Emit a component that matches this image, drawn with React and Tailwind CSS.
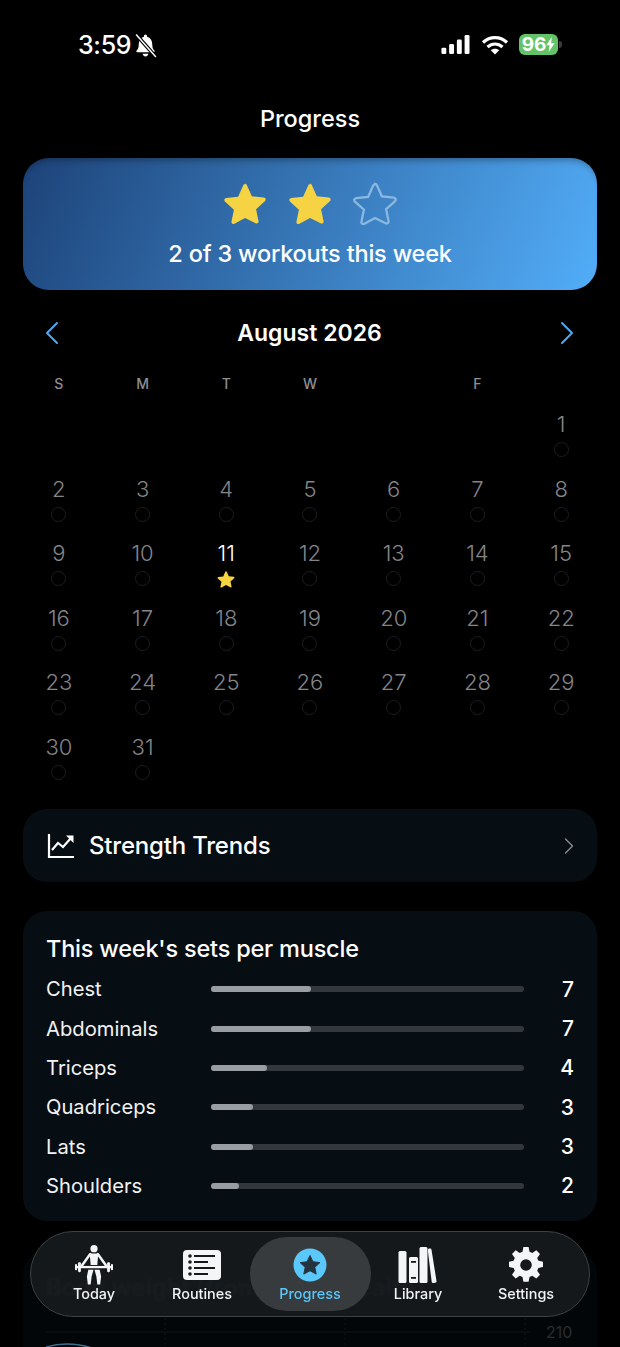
import { ChevronLeft, ChevronRight } from "lucide-react";

const STAR = "M12 1.6c.5 0 .9.3 1.1.8l2.8 6.3 6.8.7c1 .1 1.4 1.3.7 2l-5.1 4.6 1.4 6.8c.2 1-.8 1.7-1.7 1.2L12 21l-6 3.3c-.9.5-1.9-.2-1.7-1.2l1.4-6.8L.6 11.7c-.7-.7-.3-1.9.7-2l6.8-.7 2.8-6.3c.2-.5.6-.8 1.1-.8z";

const muscles = [
    { name: "Chest", value: 7, width: "w-[32%]" },
    { name: "Abdominals", value: 7, width: "w-[32%]" },
    { name: "Triceps", value: 4, width: "w-[18%]" },
    { name: "Quadriceps", value: 3, width: "w-[13.5%]" },
    { name: "Lats", value: 3, width: "w-[13.5%]" },
    { name: "Shoulders", value: 2, width: "w-[9%]" },
];

const weekdays = ["S", "M", "T", "W", "", "F", ""];

// August 2026 starts on a Saturday
const days = [...Array(6).fill(null), ...Array.from({ length: 31 }, (_, i) => i + 1)];

const Star = ({ className }) => (
    <svg viewBox="0 0 24 25" className={className} fill="currentColor">
        <path d={STAR} />
    </svg>
);

const StatusBar = () => (
    <div className="flex h-[90px] items-start justify-between pl-[78px] pr-[58px] pt-[31px] text-white">
        <div className="flex items-center gap-[2px]">
            <span className="text-[25px] font-medium leading-[29px] tracking-[-0.3px]">3:59</span>
            <svg viewBox="0 0 24 24" className="h-[25px] w-[25px]" fill="currentColor">
                <path d="M12 1.500c.9 0 1.500.7 1.500 1.500v.6c3.300.8 5 3.500 5 7.400 0 3 .7 4.500 2 5.800.6.700.3 1.700-.8 1.700H4.300c-1.100 0-1.400-1-.8-1.700 1.300-1.300 2-2.800 2-5.800 0-3.900 1.700-6.600 5-7.400V3c0-.8.600-1.500 1.500-1.500z" />
                <path d="M9.300 20h5.400c-.2 1.500-1.300 2.500-2.700 2.500S9.500 21.500 9.300 20z" />
                <path d="M3 1.500 22 23" stroke="#000" strokeWidth="3.600" />
                <path d="M3 1.500 22 23" stroke="#fff" strokeWidth="1.400" />
            </svg>
        </div>
        <div className="flex items-center gap-[10px] pt-[3px]">
            <svg viewBox="0 0 32 22" className="h-[20px] w-[31px]" fill="currentColor">
                <rect x="0.500" y="14" width="5.400" height="7" rx="1.500" />
                <rect x="9" y="10" width="5.400" height="11" rx="1.500" />
                <rect x="17.500" y="5" width="5.400" height="16" rx="1.500" />
                <rect x="26" y="0" width="5.400" height="21" rx="1.500" />
            </svg>
            <svg viewBox="0 0 28 20" className="h-[20px] w-[28px]" fill="none" stroke="currentColor" strokeWidth="3.200">
                <path d="M2 7.500C9 1 19 1 26 7.500" />
                <path d="M6.500 12c4.500-4 10.500-4 15 0" />
                <path d="M14 19.500 9.800 15.200c2.500-2 5.900-2 8.400 0z" fill="currentColor" stroke="none" />
            </svg>
            <div className="flex items-center gap-[1px]">
                <div className="flex h-[21px] w-[39px] items-center justify-center rounded-[6px] bg-[#62c466] text-[19px] font-bold leading-none">
                    96
                    <svg viewBox="0 0 10 18" className="h-[15px] w-[9px]" fill="currentColor">
                        <path d="M6.500 0 0 10h3.800L2.800 18 10 7.500H5.800z" />
                    </svg>
                </div>
                <div className="h-[7px] w-[3px] rounded-r-full bg-[#3c3c3e]" />
            </div>
        </div>
    </div>
);

const Calendar = () => (
    <section className="mt-[21px]">
        <div className="flex h-[44px] items-center justify-between pl-[32px] pr-[33px] text-[#4ea9f2]">
            <ChevronLeft size={40} strokeWidth={1.200} />
            <h2 className="text-[23px] font-semibold leading-none text-white">August 2026</h2>
            <ChevronRight size={40} strokeWidth={1.200} />
        </div>
        <div className="mt-[21px] grid grid-cols-7 px-[17px]">
            {weekdays.map((day, i) => (
                <div key={i} className="h-[16px] text-center text-[14px] font-medium leading-[16px] text-[#8e8e93]">
                    {day}
                </div>
            ))}
        </div>
        <div className="mt-[18px] grid grid-cols-7 px-[17px]">
            {days.map((day, i) => (
                <div key={i} className="flex h-[64.600px] flex-col items-center">
                    {day && (
                        <>
                            <span className={`text-[22px] font-light leading-[28px] ${day === 11 ? "text-white" : "text-[#858589]"}`}>
                                {day}
                            </span>
                            {day === 11 ? (
                                <Star className="mt-[3px] h-[18px] w-[18px] text-[#f5d342]" />
                            ) : (
                                <span className="mt-[4px] h-[15px] w-[15px] rounded-full border border-[#1e1e20]" />
                            )}
                        </>
                    )}
                </div>
            ))}
        </div>
    </section>
);

const NavIcon = {
    today: (
        <svg viewBox="0 0 40 42" className="h-[40px] w-[38px]" fill="#f4f5f6">
            <circle cx="20" cy="3.800" r="3.800" />
            <path d="M15.500 9h9l-1 12h-7z" />
            <path d="M16 9.500 7 22M24 9.500 33 22" stroke="#f4f5f6" strokeWidth="2.600" strokeLinecap="round" />
            <rect x="0" y="22" width="40" height="2.400" />
            <rect x="3.200" y="18" width="3" height="10.500" rx="1.200" />
            <rect x="33.800" y="18" width="3" height="10.500" rx="1.200" />
            <rect x="0" y="20" width="2.200" height="6.500" rx="1" />
            <rect x="37.800" y="20" width="2.200" height="6.500" rx="1" />
            <path d="M14 26h5.500l-2 7-1 8.500h-3L12.500 33z" />
            <path d="M26 26h-5.500l2 7 1 8.500h3l.999-8.500z" />
        </svg>
    ),
    routines: (
        <svg viewBox="0 0 38 32" className="h-[32px] w-[38px]">
            <rect width="38" height="30" y="1" rx="4" fill="#f4f5f6" />
            <g fill="#15191c">
                <circle cx="7" cy="7" r="1.800" />
                <circle cx="7" cy="13" r="1.800" />
                <circle cx="7" cy="19" r="1.800" />
                <circle cx="7" cy="25" r="1.800" />
                <rect x="11" y="6" width="21" height="2" />
                <rect x="11" y="12" width="14" height="2" />
                <rect x="11" y="18" width="21" height="2" />
                <rect x="11" y="24" width="14" height="2" />
            </g>
        </svg>
    ),
    progress: (
        <svg viewBox="0 0 34 34" className="h-[34px] w-[34px]">
            <circle cx="17" cy="17" r="16.500" fill="#5ac8fa" />
            <path d="M17 7.500l3 6.300 6.900.8-5.100 4.700 1.400 6.800-6.200-3.400-6.200 3.400 1.400-6.800-5.100-4.700 6.900-.8z" fill="#24343f" stroke="#24343f" strokeLinejoin="round" />
        </svg>
    ),
    library: (
        <svg viewBox="0 0 40 38" className="h-[38px] w-[40px]" fill="#f4f5f6">
            <rect x="0.500" y="5" width="8" height="32" rx="1.500" />
            <rect x="11" y="11" width="9" height="26" rx="1.500" />
            <rect x="21.500" y="1" width="8" height="36" rx="1.500" />
            <path d="M30 4c0-1 .5-1.500 1.500-1.500h.6c.8 0 1.200.4 1.400 1.200l5 31.300c.2 1-.3 1.700-1.200 1.800l-2 .2c-.8.100-1.400-.3-1.600-1.200L30 6z" />
            <rect x="13" y="15" width="5" height="1.800" fill="#15191c" />
            <rect x="13" y="31" width="5" height="1.800" fill="#15191c" />
        </svg>
    ),
    settings: (
        <svg viewBox="0 0 34 36" className="h-[36px] w-[34px]" fill="#f4f5f6">
            <path
                fillRule="evenodd"
                d="M14.400 0h5.200l.9 4.800 2.800 1.200 4-2.800 3.700 3.700-2.800 4 1.200 2.900 4.600.9v5.300l-4.600.9-1.200 2.900 2.800 4-3.700 3.700-4-2.800-2.800 1.200-.9 4.900h-5.200l-.9-4.900-2.800-1.200-4 2.800-3.700-3.700 2.800-4-1.200-2.900-4.800-.9v-5.300l4.800-.9 1.200-2.900-2.800-4 3.700-3.700 4 2.800 2.800-1.200zM17 12.200a5.800 5.800 0 1 0 0 11.600 5.800 5.800 0 0 0 0-11.600z"
            />
        </svg>
    ),
};

const tabs = [
    { label: "Today", icon: NavIcon.today },
    { label: "Routines", icon: NavIcon.routines },
    { label: "Progress", icon: NavIcon.progress, active: true },
    { label: "Library", icon: NavIcon.library },
    { label: "Settings", icon: NavIcon.settings },
];

const TabBar = () => (
    <nav className="absolute left-[30px] top-[1231px] grid h-[86px] w-[560px] grid-cols-5 items-center overflow-hidden rounded-[43px] border border-[#3c4144] bg-[#16191c]/95 px-[9px] backdrop-blur-[1px]">
        {tabs.map((tab) => (
            <div
                key={tab.label}
                className={`relative flex h-[74px] flex-col items-center justify-end rounded-[37px] pb-[9px] ${
                    tab.active ? "-mx-[6.500px] bg-[#3b3f41]/90" : ""
                }`}
            >
                <div className="flex h-[42px] items-center justify-center">{tab.icon}</div>
                <span className={`text-[14.400px] font-medium leading-[16px] ${tab.active ? "text-[#5ac8fa]" : "text-[#f2f3f4]"}`}>
                    {tab.label}
                </span>
            </div>
        ))}
    </nav>
);

export default function App() {
    return (
        <div className="relative h-[1347px] w-[620px] overflow-hidden bg-black font-['Inter',sans-serif] text-white">
            <StatusBar />
            <h1 className="mt-[15px] h-[28px] text-center text-[23.500px] font-medium leading-[28px]">Progress</h1>

            <section className="mx-[23px] mt-[25px] flex h-[132px] flex-col items-center rounded-[26px] bg-[linear-gradient(112deg,#1d4379,#52adf8)] pt-[23px] shadow-[inset_0_7px_7px_-5px_rgba(0,0,0,0.35)]">
                <div className="flex items-center gap-[21px]">
                    <Star className="h-[44px] w-[44px] text-[#f5d342]" />
                    <Star className="h-[44px] w-[44px] text-[#f5d342]" />
                    <svg viewBox="0 0 24 25" className="h-[44px] w-[44px]" fill="none" stroke="#8ab8e0" strokeWidth="1.300">
                        <path d={STAR} />
                    </svg>
                </div>
                <p className="mt-[14px] text-[23.500px] font-medium leading-[30px] tracking-[-0.2px]">2 of 3 workouts this week</p>
            </section>

            <Calendar />

            <button className="mx-[23px] mt-[11px] flex h-[73px] w-[574px] items-center rounded-[24px] bg-[#070e13] pl-[24px] pr-[14px] pt-[2px]">
                <svg viewBox="0 0 28 26" className="h-[26px] w-[28px]" fill="none" stroke="currentColor" strokeWidth="2.200">
                    <path d="M2 1v23h25" />
                    <path d="M5 17l6-7 5 4 8-9" />
                    <path d="M19 2.500h7.500V10z" fill="currentColor" stroke="none" />
                </svg>
                <span className="ml-[14px] text-[24px] font-medium tracking-[-0.2px]">Strength Trends</span>
                <ChevronRight size={28} strokeWidth={1.100} className="ml-auto text-[#8e8e93]" />
            </button>

            <section className="mx-[23px] mt-[29px] h-[310px] rounded-[24px] bg-[#070e13] px-[23px] pt-[24px]">
                <h2 className="text-[23.500px] font-medium leading-[28px] tracking-[-0.2px]">This week's sets per muscle</h2>
                <div className="mt-[7px] flex flex-col">
                    {muscles.map((m) => (
                        <div key={m.name} className="flex h-[39.400px] items-center">
                            <span className="w-[165px] text-[20.200px] text-[#f2f2f4]">{m.name}</span>
                            <div className="h-[6px] w-[313px] rounded-full bg-[#32373d]">
                                <div className={`h-full rounded-full bg-[#9a9ca4] ${m.width}`} />
                            </div>
                            <span className="ml-auto text-[21px] font-medium">{m.value}</span>
                        </div>
                    ))}
                </div>
            </section>

            <section className="mx-[23px] mt-[29px] h-[200px] rounded-[24px] bg-[#030608] px-[23px] pt-[24px]">
                <h2 className="text-[24px] font-semibold leading-[28px] text-[#55595c]">Body weight (from Apple Health)</h2>
                <div className="relative mt-[16px]">
                    <svg viewBox="0 0 528 40" className="h-[40px] w-[528px]" fill="none">
                        <path d="M0 14h484" stroke="#101417" />
                        <path d="M119 0v40M299 0v40M479 0v40" stroke="#101417" strokeDasharray="2 3" />
                        <path d="M0 29c14-4 30-4 46 1" stroke="#3d6f8f" strokeWidth="1.500" />
                    </svg>
                    <span className="absolute left-[500px] top-[4px] text-[16px] leading-[20px] text-[#2a2d30]">210</span>
                </div>
            </section>

            <TabBar />
        </div>
    );
}
